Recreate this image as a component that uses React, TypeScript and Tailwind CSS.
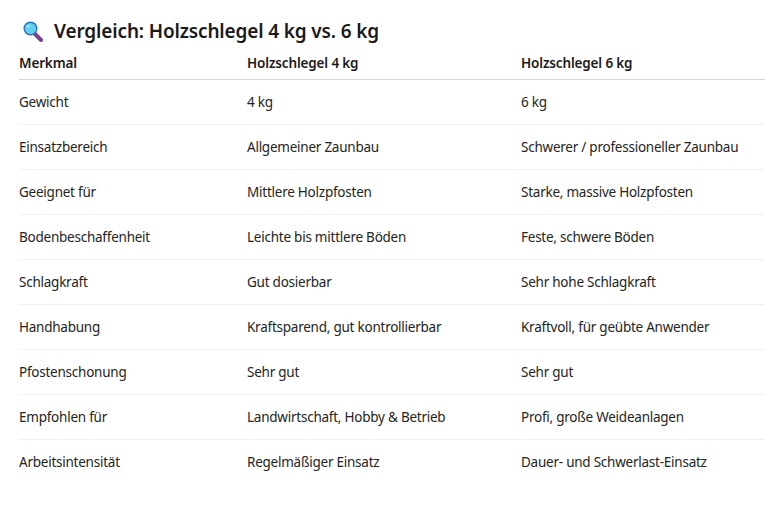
import React from 'react'

const ROWS: [string, string, string][] = [
  ['Gewicht', '4 kg', '6 kg'],
  ['Einsatzbereich', 'Allgemeiner Zaunbau', 'Schwerer / professioneller Zaunbau'],
  ['Geeignet für', 'Mittlere Holzpfosten', 'Starke, massive Holzpfosten'],
  ['Bodenbeschaffenheit', 'Leichte bis mittlere Böden', 'Feste, schwere Böden'],
  ['Schlagkraft', 'Gut dosierbar', 'Sehr hohe Schlagkraft'],
  ['Handhabung', 'Kraftsparend, gut kontrollierbar', 'Kraftvoll, für geübte Anwender'],
  ['Pfostenschonung', 'Sehr gut', 'Sehr gut'],
  ['Empfohlen für', 'Landwirtschaft, Hobby & Betrieb', 'Profi, große Weideanlagen'],
  ['Arbeitsintensität', 'Regelmäßiger Einsatz', 'Dauer- und Schwerlast-Einsatz'],
]

function Magnifier() {
  return (
    <svg width="22" height="22" viewBox="0 0 22 22" className="shrink-0">
      <path d="M12.5 13.5 L19 20" stroke="#7a3f8f" strokeWidth="4" strokeLinecap="round" />
      <circle cx="8.5" cy="8.5" r="7" fill="#2e6fb8" />
      <circle cx="8.5" cy="8.5" r="5.6" fill="#5fd0f0" />
      <ellipse cx="6.6" cy="6.2" rx="2" ry="1.4" fill="#a9ecfb" opacity="0.8" />
    </svg>
  )
}

export default function App() {
  return (
    <div
      className="min-h-screen bg-white pl-[19px] pt-[17px] text-[#242424]"
      style={{ fontFamily: '"Noto Sans", "Open Sans", sans-serif' }}
    >
      {/* Title */}
      <div className="flex h-7 items-center gap-[10px] pl-[3px]">
        <Magnifier />
        <h2 className="text-[19px] font-semibold tracking-[-0.15px] text-[#1a1a1a]">
          Vergleich: Holzschlegel 4 kg vs. 6 kg
        </h2>
      </div>

      {/* Table */}
      <div className="w-[746px] text-[13.5px] tracking-[-0.24px]">
        <div className="grid grid-cols-[228px_274px_1fr] border-b border-[#d6d6d6] pt-2 pb-[6px] leading-5 font-semibold tracking-[-0.15px] text-[#1a1a1a]">
          <div>Merkmal</div>
          <div>Holzschlegel 4 kg</div>
          <div>Holzschlegel 6 kg</div>
        </div>
        {ROWS.map(([a, b, c], i) => (
          <div
            key={a}
            className={`grid grid-cols-[228px_274px_1fr] py-3 leading-5 ${i < ROWS.length - 1 ? 'border-b border-[#f0f0f0]' : ''}`}
          >
            <div>{a}</div>
            <div>{b}</div>
            <div>{c}</div>
          </div>
        ))}
      </div>
    </div>
  )
}
